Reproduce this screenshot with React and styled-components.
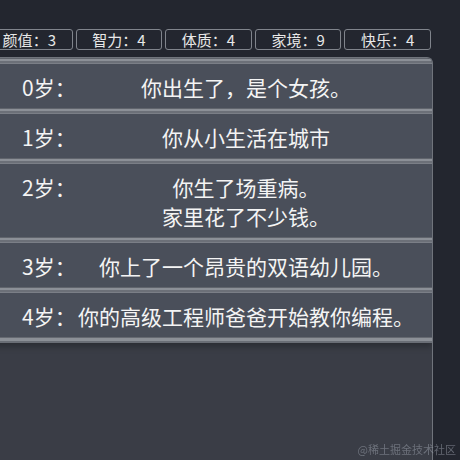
import React from "react";
import styled, { createGlobalStyle } from "styled-components";

const Global = createGlobalStyle`
  html, body {
    margin: 0;
    padding: 0;
    background: #23262f;
    overflow: hidden;
    height: 460px;
  }
  body {
    font-family: "Noto Sans CJK SC", "Noto Sans", sans-serif;
  }
`;

const Page = styled.div`
  width: 450px;
  margin-left: -17px;
  padding-top: 29px;
`;

const StatBar = styled.div`
  display: flex;
  gap: 3px;
  padding: 0 2px 0 3px;
`;

const StatBox = styled.div`
  flex: 1;
  height: 19px;
  border: 1px solid #80848c;
  border-radius: 3px;
  color: #e8e8e8;
  font-size: 15px;
  line-height: 19px;
  text-align: center;
  white-space: nowrap;
`;

const Panel = styled.div`
  margin-top: 7px;
  border: 1px solid #70747c;
  border-bottom: none;
  border-radius: 6px 6px 0 0;
  background: #3a3d46;
  height: 403px;
  overflow: hidden;
`;

const RowList = styled.div`
  box-shadow: 0 4px 6px rgba(0, 0, 0, 0.25);
  &::after {
    content: "";
    display: block;
    height: 6px;
    background: linear-gradient(
      #656971 0px, #656971 1px,
      #8c9097 1px, #8c9097 4px,
      #6a6e76 4px
    );
  }
`;

const Row = styled.div`
  display: flex;
  align-items: flex-start;
  padding: 15px 14px 6px 38px;
  background: linear-gradient(
    #60646c 0px, #60646c 1px,
    #8c9097 1px, #8c9097 3px,
    #6c7078 3px, #6c7078 5px,
    #7b7f87 5px, #7b7f87 6px,
    #4a4f5a 6px
  );
  color: #f4f4f4;
  font-size: 21px;
  line-height: 29px;
`;

const Age = styled.div`
  width: 52px;
  flex: none;
  white-space: nowrap;
`;

const Content = styled.div`
  flex: 1;
  text-align: center;
  white-space: nowrap;
`;

const Watermark = styled.div`
  position: fixed;
  right: 4px;
  bottom: 3px;
  font-size: 11px;
  color: rgba(150, 155, 165, 0.55);
  font-family: "Noto Sans CJK SC", serif;
`;

const stats = [
  ["颜值", 3],
  ["智力", 4],
  ["体质", 4],
  ["家境", 9],
  ["快乐", 4],
];

const events = [
  [0, ["你出生了，是个女孩。"]],
  [1, ["你从小生活在城市"]],
  [2, ["你生了场重病。", "家里花了不少钱。"]],
  [3, ["你上了一个昂贵的双语幼儿园。"]],
  [4, ["你的高级工程师爸爸开始教你编程。"]],
];

export default function App() {
  return (
    <>
      <Global />
      <Page>
        <StatBar>
          {stats.map(([k, v]) => (
            <StatBox key={k}>
              {k}：{v}
            </StatBox>
          ))}
        </StatBar>
        <Panel>
          <RowList>
            {events.map(([age, lines]) => (
              <Row key={age}>
                <Age>{age}岁：</Age>
                <Content>
                  {lines.map((l) => (
                    <div key={l}>{l}</div>
                  ))}
                </Content>
              </Row>
            ))}
          </RowList>
        </Panel>
      </Page>
      <Watermark>@稀土掘金技术社区</Watermark>
    </>
  );
}
